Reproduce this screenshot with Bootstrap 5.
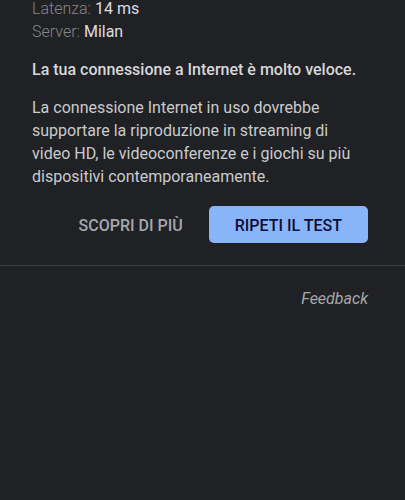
<!DOCTYPE html>
<html lang="it" data-bs-theme="dark">
<head>
    <meta charset="UTF-8">
    <meta name="viewport" content="width=device-width, initial-scale=1">
    <title>Test velocità Internet</title>
    <link href="https://cdn.jsdelivr.net/npm/bootstrap@5.3.0/dist/css/bootstrap.min.css" rel="stylesheet">
    <style>
        body {
            background: #202124;
            color: #c9cbce;
            font-family: Roboto, "Liberation Sans", sans-serif;
            font-size: 16px;
            line-height: 23px;
        }
        .risultato { margin-top: -3px; padding: 0 37px 22px 32px; }
        .etichetta { color: #85878b; font-weight: 300; }
        .valore { color: #dcdde0; }
        .titolo { color: #d6d7da; font-size: 16px; line-height: 23px; font-weight: 500; margin: 15px 0; }
        .azioni { margin-top: 18px; }
        .azioni .btn {
            border: 0;
            border-radius: 5px;
            font-size: 16px;
            font-weight: 500;
            line-height: 23px;
            padding: 8px 26px 6px;
        }
        .btn-scopri { color: #a5a8ac; }
        .btn-ripeti, .btn-ripeti:hover { background: #8ab4f8; color: #0c0f38; }
        .piede { border-top: 1px solid #3c4043; padding: 21px 37px 0 32px; }
        .piede a { color: #a5a8ac; }
    </style>
</head>
<body>
    <main class="risultato">
        <dl class="mb-0">
            <div class="d-flex gap-1">
                <dt class="etichetta">Latenza:</dt>
                <dd class="valore mb-0">14 ms</dd>
            </div>
            <div class="d-flex gap-1">
                <dt class="etichetta">Server:</dt>
                <dd class="valore mb-0">Milan</dd>
            </div>
        </dl>
        <h1 class="titolo">La tua connessione a Internet è molto veloce.</h1>
        <p class="mb-0">La connessione Internet in uso dovrebbe supportare la riproduzione in streaming di video HD, le videoconferenze e i giochi su più dispositivi contemporaneamente.</p>
        <div class="azioni d-flex justify-content-end">
            <button type="button" class="btn btn-scopri">SCOPRI DI PIÙ</button>
            <button type="button" class="btn btn-ripeti">RIPETI IL TEST</button>
        </div>
    </main>
    <footer class="piede text-end">
        <a href="#" class="fst-italic text-decoration-none">Feedback</a>
    </footer>
    <script src="https://cdn.jsdelivr.net/npm/bootstrap@5.3.0/dist/js/bootstrap.bundle.min.js"></script>
</body>
</html>
